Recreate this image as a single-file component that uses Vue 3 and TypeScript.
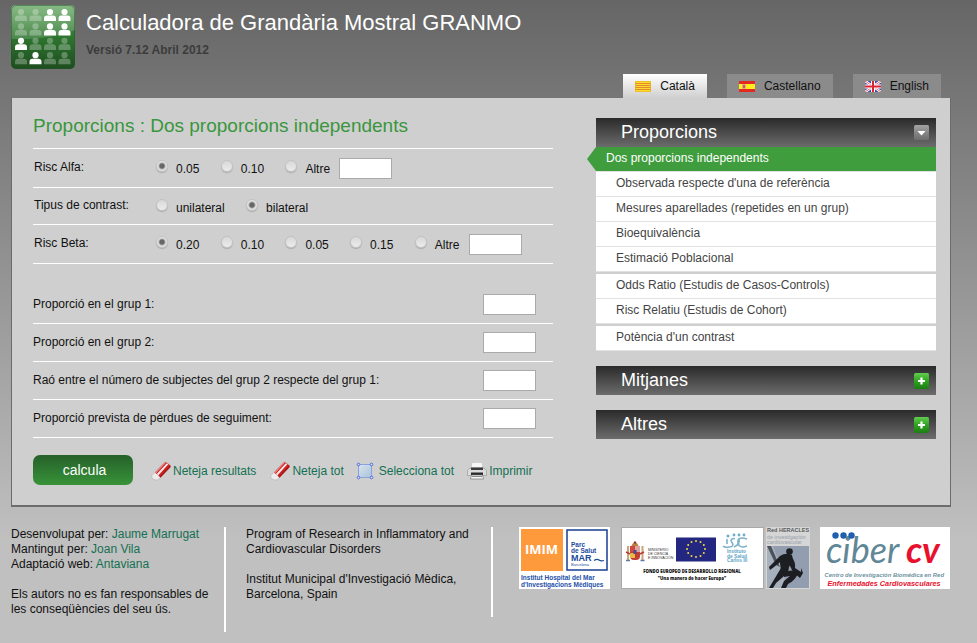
<script setup lang="ts">
import { ref } from 'vue'

interface Language {
  code: string
  label: string
}

interface RadioOption {
  value: string
  label: string
}

interface RadioRow {
  id: string
  label: string
  options: RadioOption[]
  other: boolean
}

interface NumberField {
  id: string
  label: string
}

interface Tool {
  icon: 'eraser' | 'select' | 'printer'
  label: string
}

const languages: Language[] = [
  { code: 'ca', label: 'Català' },
  { code: 'es', label: 'Castellano' },
  { code: 'en', label: 'English' },
]
const language = ref('ca')

const radioRows: RadioRow[] = [
  {
    id: 'alfa',
    label: 'Risc Alfa:',
    options: [
      { value: '0.05', label: '0.05' },
      { value: '0.10', label: '0.10' },
      { value: 'altre', label: 'Altre' },
    ],
    other: true,
  },
  {
    id: 'contrast',
    label: 'Tipus de contrast:',
    options: [
      { value: 'unilateral', label: 'unilateral' },
      { value: 'bilateral', label: 'bilateral' },
    ],
    other: false,
  },
  {
    id: 'beta',
    label: 'Risc Beta:',
    options: [
      { value: '0.20', label: '0.20' },
      { value: '0.10', label: '0.10' },
      { value: '0.05', label: '0.05' },
      { value: '0.15', label: '0.15' },
      { value: 'altre', label: 'Altre' },
    ],
    other: true,
  },
]
const selected = ref<Record<string, string>>({ alfa: '0.05', contrast: 'bilateral', beta: '0.20' })

const fields: NumberField[] = [
  { id: 'p1', label: 'Proporció en el grup 1:' },
  { id: 'p2', label: 'Proporció en el grup 2:' },
  { id: 'rao', label: 'Raó entre el número de subjectes del grup 2 respecte del grup 1:' },
  { id: 'perdues', label: 'Proporció prevista de pèrdues de seguiment:' },
]
const values = ref<Record<string, string>>({})

const tools: Tool[] = [
  { icon: 'eraser', label: 'Neteja resultats' },
  { icon: 'eraser', label: 'Neteja tot' },
  { icon: 'select', label: 'Selecciona tot' },
  { icon: 'printer', label: 'Imprimir' },
]

const menuGroups: string[][] = [
  [
    'Dos proporcions independents',
    "Observada respecte d'una de referència",
    'Mesures aparellades (repetides en un grup)',
    'Bioequivalència',
    'Estimació Poblacional',
  ],
  ['Odds Ratio (Estudis de Casos-Controls)', 'Risc Relatiu (Estudis de Cohort)'],
  ["Potència d'un contrast"],
]
const current = ref('Dos proporcions independents')
const open = ref(true)

// Highlighted figures of the 4x4 logo grid
const lit = [2, 3, 6, 7, 8, 13]
const stars = Array.from({ length: 12 }, (_, i) => ({
  x: 75 + 9 * Math.sin((i * Math.PI) / 6),
  y: 22 - 8 * Math.cos((i * Math.PI) / 6),
}))
</script>

<template>
  <div class="page">
    <header class="header">
      <svg class="logo" viewBox="0 0 64 64" aria-hidden="true">
        <defs>
          <linearGradient id="logoBg" x1="0" y1="0" x2="0" y2="1">
            <stop offset="0" stop-color="#4f9a4c" />
            <stop offset="0.5" stop-color="#2f7530" />
            <stop offset="1" stop-color="#1d4d1f" />
          </linearGradient>
          <linearGradient id="logoGloss" x1="0" y1="0" x2="0" y2="1">
            <stop offset="0" stop-color="#fff" stop-opacity="0.32" />
            <stop offset="1" stop-color="#fff" stop-opacity="0.14" />
          </linearGradient>
        </defs>
        <rect width="64" height="64" rx="5" fill="url(#logoBg)" />
        <path d="M0 5Q0 0 5 0H59Q64 0 64 5V25Q40 35 0 34Z" fill="url(#logoGloss)" />
        <g v-for="n in 16" :key="n" fill="#fff" :fill-opacity="lit.includes(n - 1) ? 1 : 0.28">
          <circle :cx="10 + ((n - 1) % 4) * 14.5" :cy="7 + Math.floor((n - 1) / 4) * 14.4" r="3.1" />
          <path
            :transform="`translate(${4 + ((n - 1) % 4) * 14.5} ${10.5 + Math.floor((n - 1) / 4) * 14.4})`"
            d="M0 5.600V3Q0 0 3 0H9Q12 0 12 3V5.600Z"
          />
        </g>
        <rect x="0.5" y="0.5" width="63" height="63" rx="5" fill="none" stroke="#24562a" stroke-opacity="0.5" />
      </svg>
      <div class="titles">
        <h1>Calculadora de Grandària Mostral GRANMO</h1>
        <p>Versió 7.12 Abril 2012</p>
      </div>
    </header>

    <nav class="tabs">
      <a
        v-for="lang in languages"
        :key="lang.code"
        href="#"
        :class="{ active: language === lang.code }"
        @click.prevent="language = lang.code"
      >
        <svg v-if="lang.code === 'ca'" viewBox="0 0 16 11" aria-hidden="true">
          <rect width="16" height="11" fill="#fddc2e" />
          <path d="M0 2.5H16M0 4.5H16M0 6.5H16M0 8.500H16" stroke="#e58a2c" />
          <rect x="0.5" y="0.5" width="15" height="10" fill="none" stroke="#e0b020" stroke-opacity="0.6" />
        </svg>
        <svg v-else-if="lang.code === 'es'" viewBox="0 0 16 11" aria-hidden="true">
          <rect width="16" height="11" fill="#e22a22" />
          <rect y="3" width="16" height="5" fill="#ffee1c" />
          <rect x="3" y="3" width="4" height="5" fill="#e8b070" />
          <rect x="4" y="4" width="2" height="3" fill="#c0605a" />
        </svg>
        <svg v-else viewBox="0 0 16 11" aria-hidden="true">
          <rect width="16" height="11" fill="#3a4ba0" />
          <path d="M0 0L16 11M16 0L0 11" stroke="#fff" stroke-width="2.6" />
          <path d="M0 0L16 11M16 0L0 11" stroke="#e0525c" stroke-width="0.9" />
          <path d="M8 0V11M0 5.5H16" stroke="#fff" stroke-width="4" />
          <path d="M8 0V11M0 5.5H16" stroke="#dd2234" stroke-width="2" />
        </svg>
        {{ lang.label }}
      </a>
    </nav>

    <main class="panel">
      <form class="form" @submit.prevent>
        <h2>Proporcions : Dos proporcions independents</h2>
        <div
          v-for="row in radioRows"
          :key="row.id"
          class="row choices"
          :class="{ slim: !row.other }"
          role="radiogroup"
          :aria-labelledby="'lbl-' + row.id"
        >
          <span :id="'lbl-' + row.id" class="name">{{ row.label }}</span>
          <div class="options">
            <template v-for="option in row.options" :key="option.value">
              <label class="option">
                <input v-model="selected[row.id]" type="radio" :name="row.id" :value="option.value" />
                <span>{{ option.label }}</span>
              </label>
              {{ ' ' }}
            </template>
            <input
              v-if="row.other"
              v-model="values[row.id]"
              class="box"
              type="text"
              :aria-label="row.label + ' altre'"
            />
          </div>
        </div>
        <div class="numbers">
          <div v-for="field in fields" :key="field.id" class="row number">
            <label :for="field.id">{{ field.label }}</label>
            <input :id="field.id" v-model="values[field.id]" class="box" type="text" />
          </div>
        </div>
        <div class="actions">
          <button class="submit" type="submit">calcula</button>
          <a v-for="tool in tools" :key="tool.label" href="#" :class="tool.icon" @click.prevent>
            <svg v-if="tool.icon === 'eraser'" viewBox="0 0 20 20" aria-hidden="true">
              <path d="M0.800 14.500L13 1.800L15 1L19.500 4.500V6L7 18.800L5 19.200L1 17.500Z" fill="#ececec" stroke="#b4b4b4" stroke-width="0.7" />
              <path d="M4 11.500L13.500 1.800L15 1.200L19.500 4.500V6L9.500 16.500Z" fill="#cc2222" />
              <path d="M5.800 13L15.800 2.300L17.300 3.300L7.300 14.500Z" fill="#fbeaea" />
              <path d="M4 11.500L13.500 1.800L14.800 1.800L5 12.400Z" fill="#ec8080" />
              <path d="M8.600 15.700L19 4.800L19.500 6L9.500 16.500Z" fill="#a01313" />
            </svg>
            <svg v-else-if="tool.icon === 'select'" viewBox="0 0 20 20" aria-hidden="true">
              <defs>
                <linearGradient id="selectFill" x1="0" y1="0" x2="1" y2="1">
                  <stop offset="0" stop-color="#d9e4ee" />
                  <stop offset="1" stop-color="#a9c2da" />
                </linearGradient>
              </defs>
              <rect x="3.500" y="3.500" width="13" height="13" fill="url(#selectFill)" stroke="#8ba3dc" />
              <g fill="#dfe6fa" stroke="#4a66dc">
                <circle cx="3.500" cy="3.500" r="1.300" />
                <circle cx="16.500" cy="3.500" r="1.300" />
                <circle cx="3.500" cy="16.500" r="1.300" />
                <circle cx="16.500" cy="16.500" r="1.300" />
              </g>
            </svg>
            <svg v-else viewBox="0 0 20 20" aria-hidden="true">
              <path d="M5 1.500H15L16 7H4Z" fill="#f7f7f7" stroke="#c2c2c2" stroke-width="0.6" />
              <path d="M3 7H17L19.500 9.500V14.500H0.500V9.500Z" fill="#dcdcdc" stroke="#929292" stroke-width="0.600" />
              <path d="M4 6.500H16V9H4Z" fill="#3c3c3c" />
              <path d="M4 11.500H16V14H4Z" fill="#2c2c2c" />
              <path d="M4.500 14H15.500L16.500 18H3.500Z" fill="#f4f4f4" stroke="#666" stroke-width="0.6" />
              <path d="M5 15.500H15" stroke="#8a8a8a" />
            </svg>
            {{ tool.label }}
          </a>
        </div>
      </form>

      <aside class="menu">
        <section>
          <button class="head" type="button" :aria-expanded="open" @click="open = !open">
            Proporcions
            <svg viewBox="0 0 15 16" aria-hidden="true">
              <defs>
                <linearGradient id="greyBtn" x1="0" y1="0" x2="0" y2="1">
                  <stop offset="0" stop-color="#a2a2a2" />
                  <stop offset="1" stop-color="#6c6c6c" />
                </linearGradient>
              </defs>
              <rect width="15" height="15" rx="1.500" fill="url(#greyBtn)" />
              <path d="M3.500 6H11.500L7.500 10.500Z" fill="#fff" />
            </svg>
          </button>
          <template v-if="open">
            <ul v-for="(group, i) in menuGroups" :key="i">
              <li v-for="item in group" :key="item">
                <a href="#" :class="{ current: item === current }" @click.prevent="current = item">{{ item }}</a>
              </li>
            </ul>
          </template>
        </section>
        <section v-for="title in ['Mitjanes', 'Altres']" :key="title">
          <button class="head" type="button" aria-expanded="false">
            {{ title }}
            <svg viewBox="0 0 15 16" aria-hidden="true">
              <defs>
                <linearGradient id="greenBtn" x1="0" y1="0" x2="0" y2="1">
                  <stop offset="0" stop-color="#62cc4e" />
                  <stop offset="0.5" stop-color="#2fa320" />
                  <stop offset="1" stop-color="#1c7c12" />
                </linearGradient>
              </defs>
              <rect width="15" height="16" rx="1.500" fill="url(#greenBtn)" />
              <path d="M7.500 4.500V11.500M4 8H11" stroke="#fff" stroke-width="2.200" />
            </svg>
          </button>
        </section>
      </aside>
    </main>

    <footer class="footer">
      <div class="text">
        <p>
          Desenvolupat per: <a href="#">Jaume Marrugat</a><br />
          Mantingut per: <a href="#">Joan Vila</a><br />
          Adaptació web: <a href="#">Antaviana</a>
        </p>
        <p>Els autors no es fan responsables de les conseqüències del seu ús.</p>
      </div>
      <div class="text">
        <p>Program of Research in Inflammatory and Cardiovascular Disorders</p>
        <p>Institut Municipal d'Investigació Mèdica, Barcelona, Spain</p>
      </div>
      <div class="sponsors">
        <svg class="imim" viewBox="0 0 91 62" role="img" aria-label="IMIM Parc de Salut Mar">
          <rect width="91" height="62" fill="#fff" />
          <rect x="2" y="2" width="42" height="42" fill="#ff9a3c" />
          <text x="6" y="27" font-family="Open Sans" font-size="13" font-weight="700" fill="#fff">IMIM</text>
          <rect x="48" y="3" width="40" height="40" fill="#fff" stroke="#173f93" stroke-width="1.500" />
          <g font-family="Liberation Sans" font-weight="700" fill="#1d4a9c">
            <text x="52" y="20" font-size="6.500">Parc</text>
            <text x="52" y="26" font-size="6.500">de Salut</text>
            <text x="52" y="34" font-size="9">MAR</text>
            <text x="52" y="39" font-size="4" font-weight="400">Barcelona</text>
          </g>
          <path d="M75 33.500Q78 31.500 80 33T85 33.500" fill="none" stroke="#1d4a9c" stroke-width="1.200" />
          <g font-family="Liberation Sans" font-size="6.500" font-weight="700" fill="#2450a8">
            <text x="2" y="53">Institut Hospital del Mar</text>
            <text x="2" y="60">d'Investigacions Mèdiques</text>
          </g>
        </svg>
        <svg class="feder" viewBox="0 0 144 62" role="img" aria-label="Fondo Europeo de Desarrollo Regional">
          <rect x="0.500" y="0.500" width="142" height="61" fill="#fff" stroke="#a9a9a9" />
          <path d="M10 20Q14 10 18 20Z" fill="#b9813f" />
          <path d="M13 15.500H15M14 14V17" stroke="#8c2d2d" />
          <rect x="9" y="19" width="10" height="14" rx="4" fill="#c33d35" />
          <rect x="9" y="19" width="5" height="6" fill="#cf4740" />
          <rect x="14" y="19" width="5" height="6" fill="#d9a5a0" />
          <rect x="9" y="26" width="5" height="5" fill="#e8b840" />
          <rect x="12.500" y="23" width="3" height="4" fill="#4a4c90" />
          <path d="M7 19V33M21.500 19V33" stroke="#c8a678" stroke-width="2" />
          <path d="M5 25L9 27M19 27L23 25" stroke="#b83a32" stroke-width="1.500" />
          <path d="M5 33.500H9M19.500 33.500H23.500" stroke="#5a78a8" stroke-width="1.500" />
          <g font-family="Liberation Sans" font-size="3.500" fill="#333">
            <text x="27" y="24">MINISTERIO</text>
            <text x="27" y="28">DE CIENCIA</text>
            <text x="27" y="32">E INNOVACIÓN</text>
          </g>
          <rect x="55" y="10.500" width="40" height="24" fill="#23277f" />
          <circle v-for="(star, i) in stars" :key="i" :cx="star.x" :cy="star.y" r="1" fill="#f0dc3c" />
          <g fill="#6aaecb">
            <circle cx="107" cy="9" r="1.500" />
            <circle cx="113" cy="8" r="1.400" />
            <circle cx="118" cy="8" r="1.400" />
            <circle cx="123" cy="8" r="1.400" />
          </g>
          <g fill="none" stroke="#7fb1c8" stroke-width="1.600">
            <path d="M106 12V17" />
            <path d="M114 11.500Q108 11.500 111 15.500T108 20Q104 21 102 19" />
            <path d="M126 12Q116 9 117 15.500T126 19" />
            <path d="M113 20Q119 18 118 11.500" />
          </g>
          <g font-family="Liberation Sans" font-size="4.800" font-weight="700" fill="#5ba4c6">
            <text x="106" y="26">Instituto</text>
            <text x="106" y="30.500">de Salud</text>
            <text x="106" y="35">Carlos III</text>
          </g>
          <g font-family="Open Sans" font-size="4.300" font-weight="800" fill="#111" text-anchor="middle">
            <text x="71" y="46">FONDO EUROPEO DE DESARROLLO REGIONAL</text>
            <text x="71" y="52.500">"Una manera de hacer Europa"</text>
          </g>
        </svg>
        <svg class="heracles" viewBox="0 0 44 62" role="img" aria-label="Red Heracles">
          <rect width="44" height="62" fill="#d6d6d6" />
          <g font-family="Liberation Sans" fill="#5a5a5a">
            <text x="1" y="5.200" font-size="5.500" font-weight="700">Red HERACLES</text>
            <text x="1" y="11.500" font-size="5.400" fill="#98a1aa">de investigación</text>
            <text x="1" y="17.200" font-size="5.400" fill="#98a1aa">cardiovascular</text>
          </g>
          <rect x="1" y="19" width="42" height="42" fill="#929eb0" />
          <path d="M1 19H7L18 48L20 61H1Z" fill="#a7b0bd" />
          <path d="M1 19L5 19L14 40L10 38Z" fill="#4b525c" />
          <g fill="#1c1e22">
            <circle cx="23.500" cy="24.500" r="3.300" />
            <path d="M14 29Q20 25 26 28L27 33L23 40L22 46L15 44L14 36Z" />
            <path d="M3 40L14 29L18 32L8 40L4 43Z" />
            <path d="M15 41L22 44L17 50L10 56L7 61H3L9 51Z" />
            <path d="M17 46Q26 41 32 46Q30 53 22 57L20 61H15L18 54L24 49L18 50Z" />
            <path d="M25 29Q30 35 29 41L35 45V41L37 46L34 51L27 45L23 37Z" />
          </g>
        </svg>
        <svg class="ciber" viewBox="0 0 130 62" role="img" aria-label="Cibercv">
          <rect width="130" height="62" fill="#fff" />
          <text x="6" y="36" font-family="Lato" font-size="36" font-style="italic" fill="#5f8796">ciber</text>
          <text x="86" y="36" font-family="Lato" font-size="36" font-style="italic" font-weight="700" fill="#e8112d">cv</text>
          <g fill="#1f5fae">
            <circle cx="15.500" cy="8.500" r="3.200" />
            <circle cx="23.500" cy="8.500" r="3.200" />
            <circle cx="31.500" cy="8.500" r="3.200" />
          </g>
          <text x="4.500" y="49.500" font-family="Liberation Sans" font-size="5.900" font-style="italic" font-weight="700" fill="#6f93a0">
            Centro de Investigación Biomédica en Red
          </text>
          <text x="7.500" y="59" font-family="Liberation Sans" font-size="7.300" font-style="italic" font-weight="700" fill="#e8112d">
            Enfermedades Cardiovasculares
          </text>
        </svg>
      </div>
    </footer>
  </div>
</template>

<style>
body {
  margin: 0;
  background: #c0c0c0 linear-gradient(#666, #c0c0c0) no-repeat 0 0 / 100% 540px;
}
</style>

<style scoped>
.page {
  padding: 0 26px 0 11px;
  font: 12px/15px 'Liberation Sans', Arial, sans-serif;
  color: #111;
}

.page *,
.page {
  box-sizing: border-box;
}

h1,
h2,
p,
ul {
  margin: 0;
  padding: 0;
}

a {
  color: #147052;
  text-decoration: none;
}

.header {
  display: flex;
  gap: 11px;
  padding: 5px 0;
}

.logo {
  width: 64px;
  height: 64px;
}

.titles {
  padding-top: 5px;
}

h1 {
  font-size: 22px;
  line-height: 26px;
  font-weight: 400;
  color: #fff;
}

.titles p {
  margin-top: 6px;
  line-height: 16px;
  font-weight: 700;
  color: #3c3c3c;
}

.tabs {
  display: flex;
  justify-content: flex-end;
  gap: 20px;
  padding-right: 10px;
}

.tabs a {
  display: flex;
  align-items: center;
  gap: 9px;
  height: 24px;
  padding: 0 12px;
  background: #8b8b8b;
  color: #111;
}

.tabs a.active {
  background: linear-gradient(#fff, #cfcfcf);
}

.tabs svg {
  width: 16px;
  height: 11px;
}

.panel {
  display: grid;
  grid-template-columns: 520fr 340fr;
  gap: 43px;
  padding: 20px 14px 20px 21px;
  background: #cfcfcf;
  border: solid #6c6c6c;
  border-width: 0 1px 2px;
}

h2 {
  padding-bottom: 14px;
  font-size: 19px;
  line-height: 16px;
  font-weight: 400;
  color: #3a963c;
  border-bottom: 1px solid #fff;
}

.row {
  display: flex;
  border-bottom: 1px solid #fff;
}

.choices {
  height: 39px;
  padding: 9px 0 0 1px;
}

.choices.slim {
  height: 37px;
}

.name {
  width: 122px;
  line-height: 18px;
}

.slim .name {
  line-height: 16px;
}

.options {
  display: flow-root;
  white-space: nowrap;
}

.option {
  display: inline-flex;
  align-items: flex-start;
  gap: 8px;
  margin-right: 18px;
  line-height: 22px;
  vertical-align: top;
}

.option:last-of-type {
  margin-right: 6px;
}

.option input {
  appearance: none;
  width: 12px;
  height: 12px;
  margin: 2px 0 0;
  border: 1px solid #c2c2c2;
  border-radius: 50%;
  background: linear-gradient(#d8d8d8, #ececec);
  box-shadow: 0 1px 1px #a8a8a8;
}

.option input:checked {
  background: radial-gradient(circle, #666 0 2px, #e2e2e2 4px);
}

.box {
  width: 53px;
  height: 21px;
  margin: 0;
  padding: 0 4px;
  border: 1px solid #aaa;
  background: #fff;
  font: inherit;
  vertical-align: top;
}

.numbers {
  padding-top: 22px;
}

.number {
  height: 38px;
  padding: 8px 17px 0 0;
  justify-content: space-between;
}

.number label {
  line-height: 20px;
}

.actions {
  display: flex;
  align-items: center;
  padding-top: 17px;
}

.submit {
  width: 100px;
  height: 30px;
  margin-right: 4px;
  padding: 0 0 0 3px;
  border: 0;
  border-radius: 7px;
  background: linear-gradient(#25602a, #389339);
  color: #fff;
  font: 14px/30px 'Liberation Sans', Arial, sans-serif;
}

.actions a {
  display: flex;
  align-items: center;
  gap: 2px;
  margin-left: 14px;
  padding-top: 2px;
  white-space: nowrap;
}

.actions a.select {
  gap: 4px;
  margin-left: 11px;
}

.actions a.printer {
  margin-left: 13px;
}

.actions svg {
  width: 20px;
  height: 20px;
}

.menu {
  display: flex;
  flex-direction: column;
  gap: 15px;
}

.head {
  display: flex;
  align-items: center;
  justify-content: space-between;
  width: 100%;
  height: 29px;
  padding: 0 7px 0 25px;
  border: 0;
  background: linear-gradient(#2a2a2a, #6c6c6c);
  color: #fff;
  font: 18px/29px 'Liberation Sans', Arial, sans-serif;
}

.head svg {
  width: 15px;
  height: 16px;
}

ul {
  list-style: none;
}

ul + ul {
  margin-top: 2px;
}

li a {
  display: block;
  position: relative;
  height: 25px;
  padding-left: 20px;
  border-bottom: 1px solid #e2e2e2;
  background: #fff;
  color: #444;
  line-height: 22px;
}

li a.current {
  padding-left: 10px;
  background: #3f9d3d;
  color: #fff;
}

li a.current::before {
  content: '';
  position: absolute;
  top: 0;
  right: 100%;
  width: 9px;
  height: 24px;
  background: #3f9d3d;
  clip-path: polygon(100% 0, 0 50%, 100% 100%);
}

.footer {
  display: grid;
  grid-template-columns: 215fr 267fr 458fr;
  align-items: start;
  padding-top: 20px;
}

.text {
  display: flex;
  flex-direction: column;
  gap: 15px;
  padding: 0 15px 15px 0;
  border-right: 2px solid #fff;
}

.text + .text {
  padding-left: 20px;
}

.sponsors {
  display: flex;
  justify-content: flex-end;
  padding: 0 1px 0 26px;
}

.sponsors svg {
  height: 62px;
}

.imim {
  width: 91px;
  margin-right: 11px;
}

.feder {
  width: 144px;
  margin-right: 1px;
}

.heracles {
  width: 44px;
  margin-right: 10px;
}

.ciber {
  width: 130px;
}
</style>
